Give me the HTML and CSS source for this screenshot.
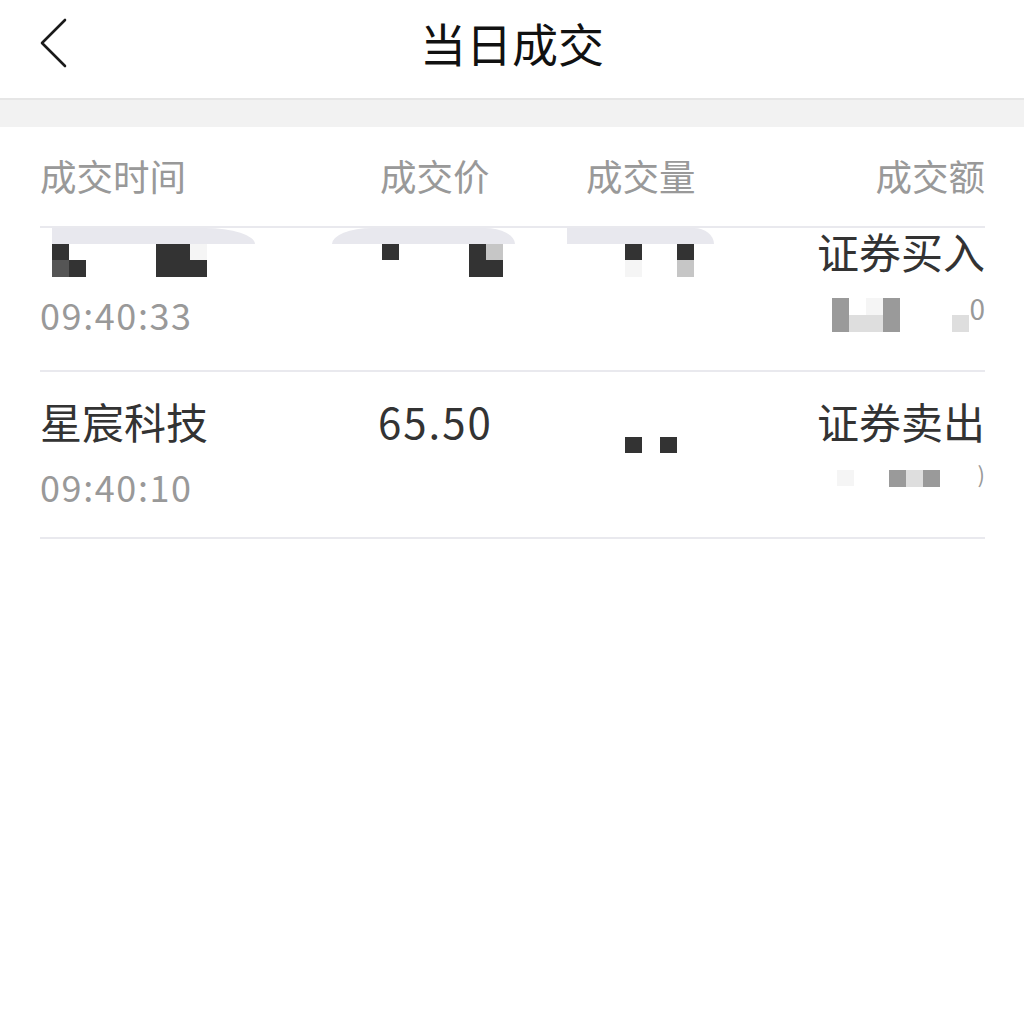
FILE: index.html
```html
<!DOCTYPE html>
<html lang="zh-CN">
<head>
<meta charset="utf-8">
<title>当日成交</title>
<link rel="stylesheet" href="styles.css">
</head>
<body>
<header class="navbar">
  <span class="back">
    <svg width="30" height="50" viewBox="0 0 30 50" fill="none" stroke="#1a1a1a" stroke-width="2.6" stroke-linecap="round" stroke-linejoin="round"><path d="M25 2 L2 25 L25 48"/></svg>
  </span>
  <h1 class="title">当日成交</h1>
</header>
<div class="band"></div>
<section class="table">
  <div class="thead">
    <span>成交时间</span>
    <span>成交价</span>
    <span>成交量</span>
    <span class="right">成交额</span>
  </div>
  <div class="row first">
    <div class="swooshes">
      <span class="sw sw1"></span><span class="sw sw2"></span><span class="sw sw3"></span>
    </div>
    <div class="cell stack">
      <div class="name mline">
        <span class="mz c2" style="margin-left:12px"><i class="d"></i><i class="o"></i><i class="m"></i><i class="d"></i></span>
        <span class="mz c3" style="margin-left:70px"><i class="d"></i><i class="d"></i><i class="w"></i><i class="d"></i><i class="d"></i><i class="d"></i></span>
      </div>
      <div class="time">09:40:33</div>
    </div>
    <div class="cell">
      <div class="name mline">
        <span class="mz c1" style="margin-left:2px"><i class="d"></i><i class="o"></i></span>
        <span class="mz c2" style="margin-left:70px"><i class="d"></i><i class="l"></i><i class="d"></i><i class="d"></i></span>
      </div>
    </div>
    <div class="cell">
      <div class="name mline">
        <span class="mz c1" style="margin-left:39px"><i class="d"></i><i class="w"></i></span>
        <span class="mz c1" style="margin-left:35px"><i class="d"></i><i class="l"></i></span>
      </div>
    </div>
    <div class="cell stack end">
      <div class="type">证券买入</div>
      <div class="amount">
        <span class="mz c4"><i class="g"></i><i class="o"></i><i class="w"></i><i class="g"></i><i class="g"></i><i class="x"></i><i class="x"></i><i class="g"></i></span>
        <span class="mz c1" style="margin-left:52px"><i class="o"></i><i class="x"></i></span>
        <span class="zero">0</span>
      </div>
    </div>
  </div>
  <div class="row">
    <div class="cell stack">
      <div class="name">星宸科技</div>
      <div class="time">09:40:10</div>
    </div>
    <div class="cell">
      <div class="name price">65.50</div>
    </div>
    <div class="cell">
      <div class="vol">
        <span class="mz c1s" style="margin-left:39px"><i class="d"></i></span>
        <span class="mz c1s" style="margin-left:18px"><i class="d"></i></span>
      </div>
    </div>
    <div class="cell stack end">
      <div class="type">证券卖出</div>
      <div class="amount">
        <span class="mz c1s"><i class="w"></i></span>
        <span class="mz c3s" style="margin-left:35px"><i class="g"></i><i class="x"></i><i class="g"></i></span>
        <span class="zero paren">)</span>
      </div>
    </div>
  </div>
</section>
</body>
</html>
```

FILE: styles.css
```css
* { box-sizing: border-box; }
html, body { margin: 0; padding: 0; background: #fff; }
body {
  width: 1024px;
  font-family: "Noto Sans CJK SC", "Noto Sans", sans-serif;
  color: #333;
}
.navbar {
  height: 100px;
  border-bottom: 2px solid #e6e6e6;
  display: flex;
  align-items: center;
  justify-content: center;
  position: relative;
}
.back {
  position: absolute;
  left: 40px;
  top: 18px;
  width: 30px;
  height: 50px;
}
.back svg { display: block; }
.title {
  margin: 0;
  margin-top: -14px;
  font-size: 46px;
  font-weight: 400;
  color: #111;
}
.band { height: 27px; background: #f2f2f2; }
.table { padding: 0 39px 0 40px; }
.thead {
  height: 101px;
  display: grid;
  grid-template-columns: 340px 206px 1fr 1fr;
  align-items: center;
  border-bottom: 2px solid #e9e9ee;
  font-size: 36.5px;
  color: #999;
  padding-bottom: 2px;
}
.right { justify-self: end; }
.row {
  position: relative;
  display: grid;
  grid-template-columns: 340px 206px 1fr 1fr;
  align-items: start;
  border-bottom: 2px solid #e9e9ee;
  padding: 24px 0 29px;
}
.row.first { padding: 6px 0 34px; }
.cell { display: flex; flex-direction: column; }
.cell.end { align-items: flex-end; }
.name { font-size: 42px; line-height: 50px; height: 50px; color: #333; }
.price { letter-spacing: 2px; margin-left: -2px; }
.time { font-size: 36px; line-height: 44px; color: #999; margin-top: 18px; letter-spacing: 1.6px; }
.row.first .time { margin-top: 8px; }
.type { font-size: 42px; line-height: 50px; color: #333; }
.row.first .type { margin-top: -8px; }
.amount {
  display: flex;
  align-items: flex-start;
  margin-top: 24px;
  height: 36px;
}
.row.first .amount { margin-top: 22px; }
.zero { font-size: 28px; line-height: 26px; color: #999; margin-top: -3px; }
.zero.paren { margin-left: 38px; margin-top: -10px; font-size: 22px; }
.mline { display: flex; align-items: flex-start; padding-top: 9px; }
.vol { display: flex; margin-top: 41px; }

/* mosaic tiles */
.mz { display: inline-grid; grid-auto-rows: 17px; }
.mz.c1 { grid-template-columns: 17px; }
.mz.c2 { grid-template-columns: 17px 17px; }
.mz.c3 { grid-template-columns: 17px 17px 17px; }
.mz.c4 { grid-template-columns: 17px 17px 17px 17px; }
.mz.c1s { grid-template-columns: 17px; grid-auto-rows: 16px; }
.mz.c3s { grid-template-columns: 17px 17px 17px; }
.mz i { display: block; }
.mz i.d { background: #333; }
.mz i.m { background: #555; }
.mz i.g { background: #9a9a9a; }
.mz i.l { background: #c6c6c6; }
.mz i.x { background: #dedede; }
.mz i.w { background: #f5f5f5; }
.mz i.o { background: transparent; }

/* light scroll shapes over the first row */
.swooshes {
  position: absolute;
  left: 12px;
  top: 0;
  right: 0;
  height: 18px;
  pointer-events: none;
}
.sw {
  position: absolute;
  top: 0;
  height: 16px;
  background: #e8e8ee;
}
.sw1 { left: 0; width: 203px; border-top-right-radius: 50px 16px; }
.sw2 { left: 280px; width: 183px; border-top-left-radius: 40px 16px; border-top-right-radius: 30px 16px; }
.sw3 { left: 515px; width: 147px; border-top-right-radius: 20px 16px; }
```
